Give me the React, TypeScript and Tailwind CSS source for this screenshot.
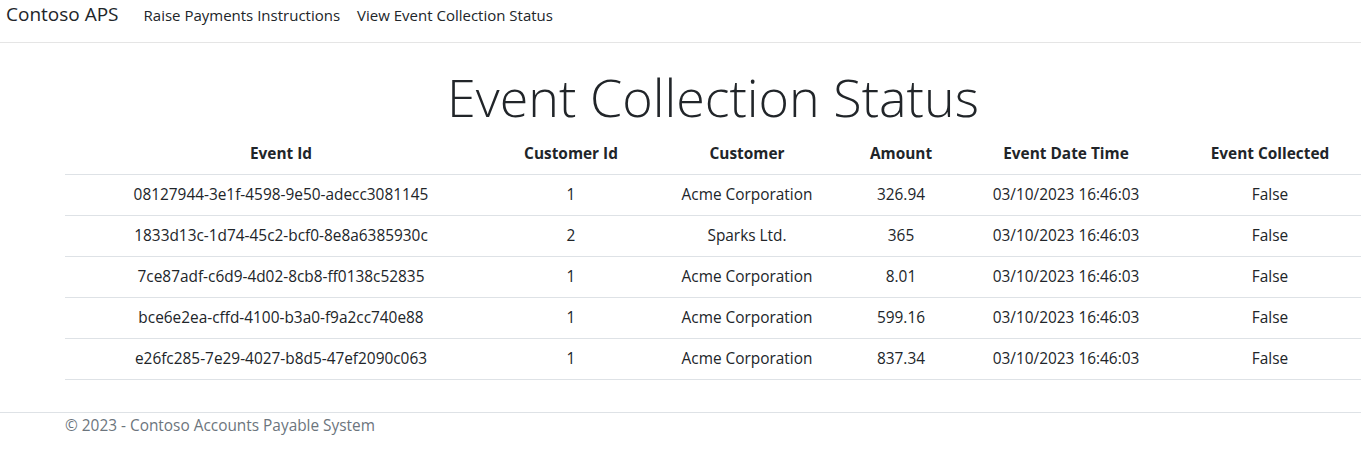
const rows = [
  { id: '08127944-3e1f-4598-9e50-adecc3081145', customerId: 1, customer: 'Acme Corporation', amount: '326.94' },
  { id: '1833d13c-1d74-45c2-bcf0-8e8a6385930c', customerId: 2, customer: 'Sparks Ltd.', amount: '365' },
  { id: '7ce87adf-c6d9-4d02-8cb8-ff0138c52835', customerId: 1, customer: 'Acme Corporation', amount: '8.01' },
  { id: 'bce6e2ea-cffd-4100-b3a0-f9a2cc740e88', customerId: 1, customer: 'Acme Corporation', amount: '599.16' },
  { id: 'e26fc285-7e29-4027-b8d5-47ef2090c063', customerId: 1, customer: 'Acme Corporation', amount: '837.34' },
];

export default function App() {
  return (
    <div className="min-h-screen bg-white font-['Open_Sans',sans-serif] text-[#212529]">
      <header className="h-[43px] border-b border-[#e5e5e5]">
        <nav className="flex items-start pl-[6px] pt-[2px]">
          <a className="text-[19px] leading-[24px] text-[#212529] mr-[25px]">Contoso APS</a>
          <a className="text-[15px] leading-[24px] mt-[1px] mr-[17px] text-[#212529]">Raise Payments Instructions</a>
          <a className="text-[15px] leading-[24px] mt-[1px] text-[#212529]">View Event Collection Status</a>
        </nav>
      </header>

      <main className="ml-[65px] w-[1296px]">
        <h1 className="text-center text-[52px] font-light leading-[62px] mt-[23px] mb-[6px]">
          Event Collection Status
        </h1>
        <table className="w-full table-fixed border-collapse text-[15.4px]">
          <colgroup>
            <col className="w-[432px]" />
            <col className="w-[148px]" />
            <col className="w-[204px]" />
            <col className="w-[104px]" />
            <col className="w-[226px]" />
            <col />
          </colgroup>
          <thead>
            <tr className="border-b border-[#dee2e6]">
              <th className="h-[40px] font-bold">Event Id</th>
              <th className="font-bold">Customer Id</th>
              <th className="font-bold">Customer</th>
              <th className="font-bold">Amount</th>
              <th className="font-bold">Event Date Time</th>
              <th className="font-bold">Event Collected</th>
            </tr>
          </thead>
          <tbody>
            {rows.map((r) => (
              <tr key={r.id} className="border-b border-[#dee2e6] text-center">
                <td className="h-[41px]">{r.id}</td>
                <td>{r.customerId}</td>
                <td>{r.customer}</td>
                <td>{r.amount}</td>
                <td>03/10/2023 16:46:03</td>
                <td>False</td>
              </tr>
            ))}
          </tbody>
        </table>
      </main>

      <footer className="mt-[32px] border-t border-[#dee2e6]">
        <div className="ml-[65px] leading-[26px] text-[15.4px] text-[#6c757d]">© 2023 - Contoso Accounts Payable System</div>
      </footer>
    </div>
  );
}
